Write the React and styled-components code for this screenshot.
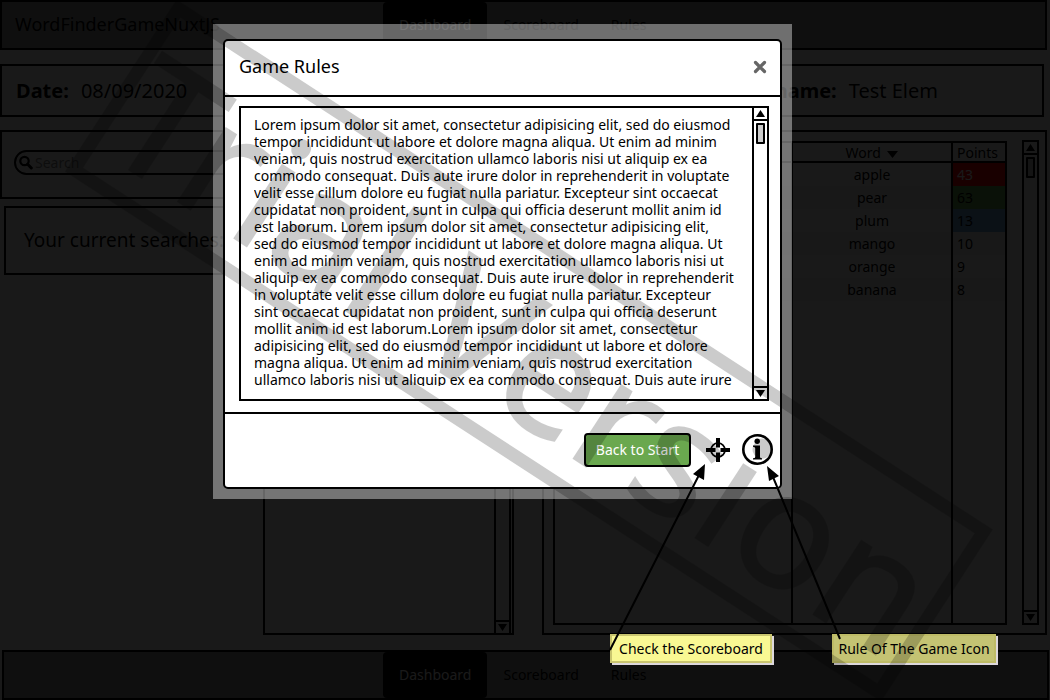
import React from "react";
import styled, { createGlobalStyle, css } from "styled-components";

const GlobalStyle = createGlobalStyle`
  *, *::before, *::after { box-sizing: border-box; }
  body {
    margin: 0;
    background: #fff;
    color: #000;
    font-family: "Noto Sans", "Open Sans", sans-serif;
    font-size: 14px;
    line-height: 17px;
  }
  button, input { font: inherit; color: inherit; }
`;

const Stage = styled.div`
  position: relative;
  min-height: 100vh;
  overflow: hidden;
`;

const Page = styled.div`
  display: flex;
  flex-direction: column;
  min-height: 100vh;
`;

const frame = css`
  border: 2px solid #000;
`;

const Bar = styled.header`
  ${frame}
  display: grid;
  grid-template-columns: ${(p) => (p.$shifted ? 379 : 381)}px 1fr;
  height: 50px;
  margin-left: ${(p) => (p.$shifted ? 2 : 0)}px;
  margin-right: ${(p) => (p.$shifted ? 1 : 3)}px;
  background: #999;
`;

const Brand = styled.span`
  padding-left: 13px;
  font-size: 18px;
  line-height: 44px;
  white-space: nowrap;
`;

const Nav = styled.nav`
  display: flex;
  grid-column: 2;
`;

const Tab = styled.a`
  padding: 0 16px;
  border-radius: 4px;
  line-height: 46px;
  text-decoration: none;
  color: ${(p) => (p.$active ? "#fff" : "#000")};
  background: ${(p) => (p.$active ? "#000" : "transparent")};
`;

const InfoPanel = styled.section`
  ${frame}
  display: flex;
  justify-content: space-between;
  height: 53px;
  margin: 14px 6px 13px 0;
  padding: 0 104px 0 14px;
  font-size: 20px;
  line-height: 50px;
`;

const Field = styled.div`
  display: flex;
  gap: 12px;
`;

const Body = styled.main`
  display: grid;
  grid-template-columns: 514fr 505fr;
  gap: 28px;
  flex: 1;
  margin: 0 3px 15px 0;
`;

const LeftColumn = styled.div`
  display: flex;
  flex-direction: column;
`;

const SearchPanel = styled.section`
  ${frame}
  height: 69px;
  padding: 18px 12px;
`;

const SearchBox = styled.label`
  ${frame}
  display: flex;
  align-items: center;
  gap: 2px;
  height: 25px;
  padding-left: 2px;
  border-radius: 13px;

  input {
    flex: 1;
    min-width: 0;
    border: 0;
    padding: 0;
    background: transparent;
    outline: 0;
  }
  input::placeholder { color: #888; opacity: 1; }
`;

const SearchesPanel = styled.section`
  ${frame}
  height: 69px;
  margin: 7px 0 13px 4px;
  padding-left: 18px;
  font-size: 19px;
  line-height: 65px;
`;

const ResultsPanel = styled.section`
  ${frame}
  display: flex;
  justify-content: flex-end;
  flex: 1;
  width: 251px;
  margin-left: auto;
  padding-right: 1px;
`;

const ScorePanel = styled.section`
  ${frame}
  display: flex;
  gap: 15px;
  padding: 8px 6px 8px 9px;
`;

const ScoreTable = styled.table`
  ${frame}
  flex: 1;
  display: table;
  height: 484px;
  margin-top: 1px;
  border-collapse: separate;
  border-spacing: 0;
  table-layout: fixed;
`;

const HeadCell = styled.th`
  height: 20px;
  padding: 0 0 0 ${(p) => (p.$points ? 4 : 0)}px;
  border-bottom: 2px solid #000;
  border-right: ${(p) => (p.$points ? 0 : 2)}px solid #000;
  width: ${(p) => p.$width};
  font-weight: 400;
  text-align: ${(p) => (p.$points ? "left" : "center")};
  white-space: nowrap;

  svg { margin-left: 3px; }
`;

const Cell = styled.td`
  height: ${(p) => (p.$filler ? "auto" : "23px")};
  padding: 0 0 0 ${(p) => (p.$points ? 4 : 0)}px;
  border-right: ${(p) => (p.$points ? 0 : 2)}px solid #000;
  background: ${(p) => p.$fill || "transparent"};
  color: ${(p) => p.$ink || "#000"};
  text-align: ${(p) => (p.$points ? "left" : "center")};
`;

const Track = styled.div`
  display: flex;
  flex-direction: column;
  width: 17px;
  border: solid #000;
  border-width: ${(p) => (p.$framed ? "2px" : "0 2px")};
  ${(p) => p.$inner && "border-width: 0 0 0 2px; width: 15px;"}
`;

const ArrowButton = styled.button`
  display: flex;
  align-items: center;
  justify-content: center;
  height: 13px;
  padding: 0;
  border: solid #000;
  border-width: ${(p) => (p.$down ? "2px 0 0" : "0 0 2px")};
  background: transparent;
`;

const Thumb = styled.div`
  ${frame}
  width: 9px;
  height: 21px;
  margin: 2px auto auto;
  border-radius: 1px;
  background: #ccc;
`;

const Shade = styled.div`
  position: absolute;
  inset: 0;
  background: rgba(0, 0, 0, 0.9);
`;

const ModalLayer = styled.div`
  position: absolute;
  inset: 0;
  display: flex;
  justify-content: center;
  align-items: flex-start;
  padding: 24px 45px 0 0;
`;

const Halo = styled.div`
  padding: 15px 10px 10px;
  background: rgba(255, 255, 255, 0.4);
`;

const Dialog = styled.section`
  ${frame}
  width: 559px;
  border-radius: 5px;
  background: #fff;
`;

const DialogHead = styled.header`
  display: flex;
  justify-content: space-between;
  align-items: center;
  height: 56px;
  padding: 0 13px 3px 14px;
  border-bottom: 2px solid #000;

  h2 {
    margin: 0;
    font-size: 18px;
    font-weight: 400;
  }
`;

const IconButton = styled.button`
  display: flex;
  padding: 0;
  border: 0;
  background: transparent;
`;

const RulesBox = styled.div`
  ${frame}
  display: flex;
  justify-content: space-between;
  height: 295px;
  margin: 9px 11px 11px 14px;
`;

const RulesText = styled.p`
  height: 270px;
  margin: 8px 0 0 13px;
  overflow: hidden;
`;

const Line = styled.span`
  display: block;
  white-space: nowrap;
`;

const DialogFoot = styled.footer`
  display: flex;
  justify-content: flex-end;
  align-items: center;
  gap: 12px;
  height: 75px;
  padding: 0 7px 2px 0;
  border-top: 2px solid #000;
`;

const StartButton = styled.button`
  ${frame}
  width: 107px;
  height: 34px;
  margin-right: 3px;
  padding: 0;
  border-radius: 4px;
  background: #6aa84f;
  color: #fff;
  white-space: nowrap;
`;

const Note = styled.div`
  position: absolute;
  left: ${(p) => p.$left}px;
  top: 634px;
  width: ${(p) => p.$width}px;
  height: 29px;
  border: 2px solid ${(p) => (p.$dim ? "#bebb66" : "#c9c56f")};
  background: ${(p) => (p.$dim ? "#c4c373" : "#f9f893")};
  box-shadow: 2px 2px 0 #ddd8dc;
  line-height: 25px;
  text-align: center;
  white-space: nowrap;
`;

const Drawing = styled.svg`
  position: absolute;
  left: 0;
  top: 0;
  pointer-events: none;
`;

const WatermarkText = styled.text`
  font-family: "Noto Sans", sans-serif;
  font-size: 163px;
  stroke: #000;
  stroke-width: 2px;
`;

const RULES = [
  "Lorem ipsum dolor sit amet, consectetur adipisicing elit, sed do eiusmod",
  "tempor incididunt ut labore et dolore magna aliqua. Ut enim ad minim",
  "veniam, quis nostrud exercitation ullamco laboris nisi ut aliquip ex ea",
  "commodo consequat. Duis aute irure dolor in reprehenderit in voluptate",
  "velit esse cillum dolore eu fugiat nulla pariatur. Excepteur sint occaecat",
  "cupidatat non proident, sunt in culpa qui officia deserunt mollit anim id",
  "est laborum. Lorem ipsum dolor sit amet, consectetur adipisicing elit,",
  "sed do eiusmod tempor incididunt ut labore et dolore magna aliqua. Ut",
  "enim ad minim veniam, quis nostrud exercitation ullamco laboris nisi ut",
  "aliquip ex ea commodo consequat. Duis aute irure dolor in reprehenderit",
  "in voluptate velit esse cillum dolore eu fugiat nulla pariatur. Excepteur",
  "sint occaecat cupidatat non proident, sunt in culpa qui officia deserunt",
  "mollit anim id est laborum.Lorem ipsum dolor sit amet, consectetur",
  "adipisicing elit, sed do eiusmod tempor incididunt ut labore et dolore",
  "magna aliqua. Ut enim ad minim veniam, quis nostrud exercitation",
  "ullamco laboris nisi ut aliquip ex ea commodo consequat. Duis aute irure",
];

const SCORES = [
  { word: "apple", points: 43, fill: "#f00", ink: "#fff" },
  { word: "pear", points: 63, fill: "#6aa84f" },
  { word: "plum", points: 13, fill: "#6fa8dc" },
  { word: "mango", points: 10 },
  { word: "orange", points: 9 },
  { word: "banana", points: 8 },
];

function Triangle({ down }) {
  return (
    <svg width="9" height="7" viewBox="0 0 9 7" aria-hidden="true">
      <path d={down ? "M0 0H9L4.5 7Z" : "M0 7H9L4.5 0Z"} fill="#000" />
    </svg>
  );
}

function ScrollTrack({ framed, inner }) {
  return (
    <Track $framed={framed} $inner={inner}>
      <ArrowButton type="button" aria-label="Scroll up">
        <Triangle />
      </ArrowButton>
      <Thumb />
      <ArrowButton type="button" aria-label="Scroll down" $down>
        <Triangle down />
      </ArrowButton>
    </Track>
  );
}

function Tabs() {
  return (
    <Nav>
      <Tab href="#dashboard" $active>Dashboard</Tab>
      <Tab href="#scoreboard">Scoreboard</Tab>
      <Tab href="#rules">Rules</Tab>
    </Nav>
  );
}

export default function App() {
  return (
    <Stage>
      <GlobalStyle />
      <Page>
        <Bar>
          <Brand>WordFinderGameNuxtJS</Brand>
          <Tabs />
        </Bar>
        <InfoPanel>
          <Field>
            <strong>Date:</strong>
            <span>08/09/2020</span>
          </Field>
          <Field>
            <strong>Username:</strong>
            <span>Test Elem</span>
          </Field>
        </InfoPanel>
        <Body>
          <LeftColumn>
            <SearchPanel>
              <SearchBox>
                <svg width="15" height="15" viewBox="0 0 15 15" aria-hidden="true">
                  <circle cx="6.5" cy="6" r="4.2" fill="none" stroke="#000" strokeWidth="2.2" />
                  <path d="M9.7 9.3L13.3 13" stroke="#000" strokeWidth="3" strokeLinecap="round" />
                </svg>
                <input type="text" placeholder="Search" aria-label="Search" />
              </SearchBox>
            </SearchPanel>
            <SearchesPanel>Your current searches:</SearchesPanel>
            <ResultsPanel>
              <ScrollTrack />
            </ResultsPanel>
          </LeftColumn>
          <ScorePanel>
            <ScoreTable>
              <thead>
                <tr>
                  <HeadCell $width="auto" />
                  <HeadCell $width="160px">
                    Word{" "}
                    <svg width="11" height="7" viewBox="0 0 11 7" aria-hidden="true">
                      <path d="M0 0H11L5.5 7Z" fill="#000" />
                    </svg>
                  </HeadCell>
                  <HeadCell $width="52px" $points>Points</HeadCell>
                </tr>
              </thead>
              <tbody>
                {SCORES.map((row, i) => {
                  const stripe = i % 2 ? "#f0f0f0" : "#fff";
                  return (
                    <tr key={row.word}>
                      <Cell $fill={stripe} />
                      <Cell $fill={stripe}>{row.word}</Cell>
                      <Cell $points $fill={row.fill || stripe} $ink={row.ink}>{row.points}</Cell>
                    </tr>
                  );
                })}
                <tr>
                  <Cell $filler />
                  <Cell $filler />
                  <Cell $filler $points />
                </tr>
              </tbody>
            </ScoreTable>
            <ScrollTrack framed />
          </ScorePanel>
        </Body>
        <Bar as="footer" $shifted>
          <Tabs />
        </Bar>
      </Page>

      <Shade />

      <ModalLayer>
        <Halo>
          <Dialog role="dialog" aria-labelledby="rules-title">
            <DialogHead>
              <h2 id="rules-title">Game Rules</h2>
              <IconButton type="button" aria-label="Close">
                <svg width="14" height="14" viewBox="0 0 14 14">
                  <path d="M2.5 2.5L11.5 11.5M11.5 2.5L2.5 11.5" stroke="#666" strokeWidth="3.2" strokeLinecap="round" />
                </svg>
              </IconButton>
            </DialogHead>
            <RulesBox>
              <RulesText>
                {RULES.map((line) => (
                  <Line key={line}>{line}</Line>
                ))}
              </RulesText>
              <ScrollTrack inner />
            </RulesBox>
            <DialogFoot>
              <StartButton type="button">Back to Start</StartButton>
              <IconButton type="button" aria-label="Scoreboard">
                <svg width="24" height="24" viewBox="0 0 24 24">
                  <circle cx="12" cy="12" r="7" fill="none" stroke="#000" strokeWidth="1.7" />
                  <path d="M12 0V9.5M12 14.5V24M0 12H9.5M14.5 12H24" stroke="#000" strokeWidth="4" />
                </svg>
              </IconButton>
              <IconButton type="button" aria-label="Rules of the game">
                <svg width="31" height="31" viewBox="0 0 31 31">
                  <circle cx="15.5" cy="15.5" r="14.2" fill="none" stroke="#000" strokeWidth="2.6" />
                  <circle cx="15.2" cy="7.3" r="2.7" fill="#000" />
                  <path d="M11 11.6H18V23Q18 24.3 20 24.3V25.5H11V24.3Q13.2 24.3 13.2 23V14.3Q13.2 13 11 12.8Z" fill="#000" />
                </svg>
              </IconButton>
            </DialogFoot>
          </Dialog>
        </Halo>
      </ModalLayer>

      <Note $left={610} $width={162}>Check the Scoreboard</Note>
      <Note $left={832} $width={164} $dim>Rule Of The Game Icon</Note>

      <Drawing width="1050" height="700" viewBox="0 0 1050 700" aria-hidden="true">
        <g stroke="#000" strokeWidth="2" fill="#000">
          <path d="M610 650L699 475M840 639L773 477" />
          <path d="M705 464L704 480L693 474ZM767 466L779 476L769 481Z" stroke="none" />
        </g>
        <g transform="translate(528 350) rotate(33)" opacity="0.2">
          <rect x="-479" y="-96" width="960" height="192" fill="none" stroke="#000" strokeWidth="13" />
          <WatermarkText x="0" y="66" textAnchor="middle">Trial Version</WatermarkText>
        </g>
      </Drawing>
    </Stage>
  );
}
